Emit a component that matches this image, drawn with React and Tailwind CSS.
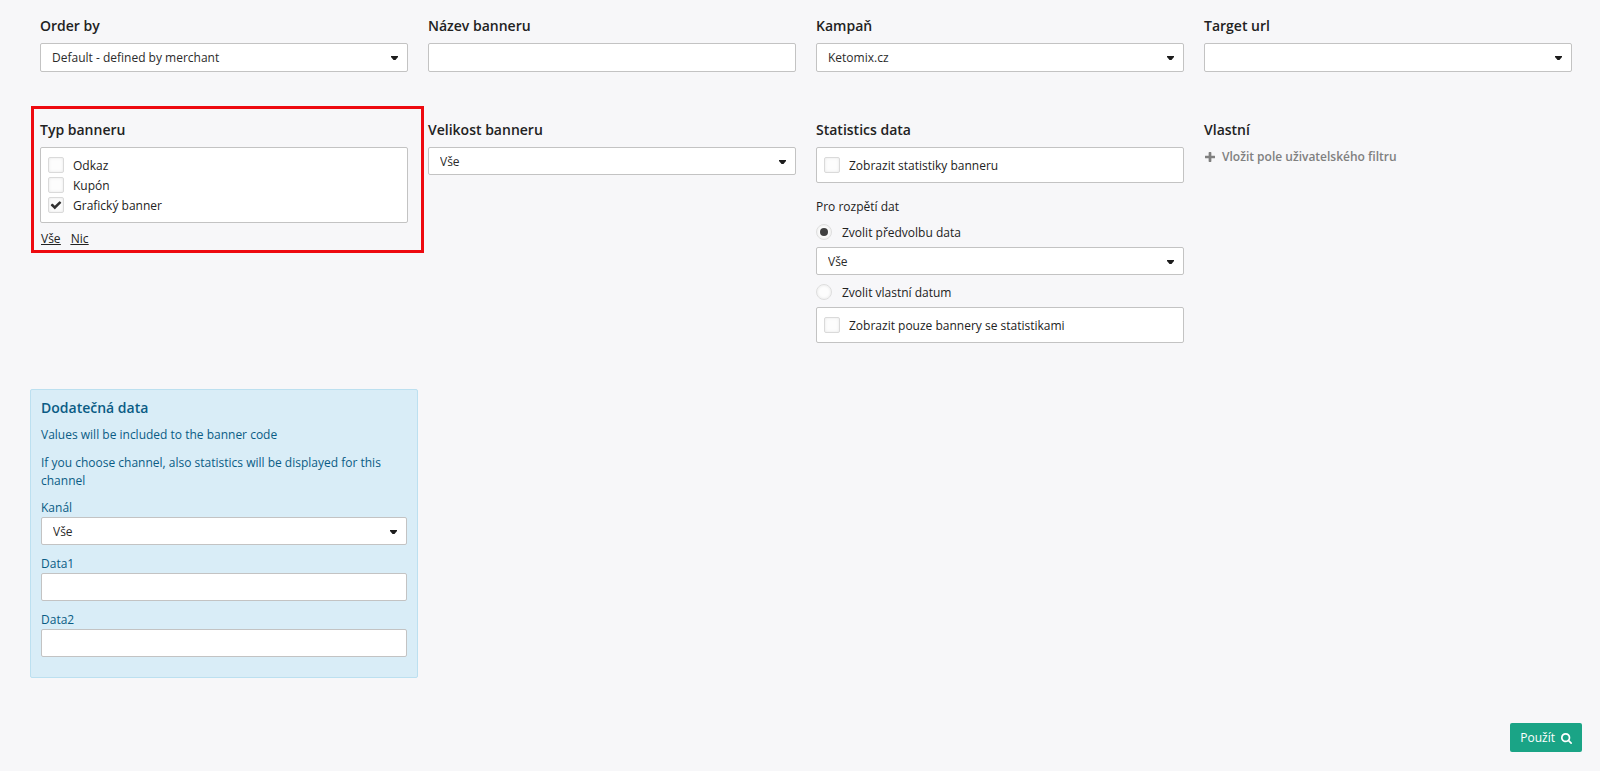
import { useState } from 'react';

const BANNER_TYPES = [
  { id: 'link', label: 'Odkaz' },
  { id: 'coupon', label: 'Kupón' },
  { id: 'image', label: 'Grafický banner' },
];

const CheckIcon = ({ className }) => (
  <svg className={className} viewBox="0 0 1792 1792" fill="currentColor">
    <path d="M1671 566q0 40-28 68l-724 724-136 136q-28 28-68 28t-68-28l-136-136-362-362q-28-28-28-68t28-68l136-136q28-28 68-28t68 28l294 295 656-657q28-28 68-28t68 28l136 136q28 28 28 68z" />
  </svg>
);

const PlusIcon = ({ className }) => (
  <svg className={className} viewBox="192 128 1408 1408" fill="currentColor">
    <path d="M1600 736v192q0 40-28 68t-68 28h-416v416q0 40-28 68t-68 28h-192q-40 0-68-28t-28-68v-416h-416q-40 0-68-28t-28-68v-192q0-40 28-68t68-28h416v-416q0-40 28-68t68-28h192q40 0 68 28t28 68v416h416q40 0 68 28t28 68z" />
  </svg>
);

const SearchIcon = ({ className }) => (
  <svg className={className} viewBox="64 128 1664 1664" fill="currentColor">
    <path d="M1216 832q0-185-131.5-316.5t-316.5-131.5-316.5 131.5-131.5 316.5 131.5 316.5 316.5 131.5 316.5-131.5 131.5-316.5zm512 832q0 52-38 90t-90 38q-54 0-90-38l-343-342q-179 124-399 124-143 0-273.5-55.5t-225-150-150-225-55.5-273.5 55.5-273.5 150-225 225-150 273.5-55.5 273.5 55.5 225 150 150 225 55.5 273.5q0 220-124 399l343 343q37 37 37 90z" />
  </svg>
);

const FieldTitle = ({ htmlFor, children }) => (
  <label htmlFor={htmlFor} className="mb-[7px] block text-sm font-semibold">
    {children}
  </label>
);

const Select = ({ id, label, options, tall }) => (
  <div className="relative">
    <select
      id={id}
      aria-label={label}
      className={`block w-full appearance-none rounded-xs border border-[#c3c3c3] bg-white pt-px pr-8 pl-[11px] text-xs text-[#2b2b2b] outline-none ${
        tall ? 'h-[29px]' : 'h-7'
      }`}
    >
      {options.map((option) => (
        <option key={option}>{option}</option>
      ))}
    </select>
    <svg className="pointer-events-none absolute top-[13px] right-[10px] h-1 w-[7px]" viewBox="0 0 7 4" fill="#1c1c1c">
      <path d="M0 0h7v1L4.5 4h-2L0 1z" />
    </svg>
  </div>
);

const TextInput = ({ id, tall }) => (
  <input
    id={id}
    type="text"
    className={`block w-full rounded-xs border border-[#c3c3c3] bg-white px-[11px] text-xs text-[#2b2b2b] outline-none ${
      tall ? 'h-[29px]' : 'h-7'
    }`}
  />
);

const Checkbox = ({ label, checked, onChange }) => (
  <label className="flex h-5 items-center gap-[9px] text-xs">
    <span className="relative h-4 w-4">
      <input
        type="checkbox"
        checked={checked}
        onChange={onChange}
        className="block h-4 w-4 appearance-none rounded-xs border border-[#dadada] bg-[#fdfdfd] shadow-[inset_0_0_3px_#e4e4e4]"
      />
      {checked && <CheckIcon className="pointer-events-none absolute top-[2px] left-[2px] h-3 w-3 text-[#333]" />}
    </span>
    <span className="pt-[2px]">{label}</span>
  </label>
);

const Radio = ({ label, checked, onChange }) => (
  <label className="flex h-4 items-center gap-[10px] text-xs">
    <span className="relative h-4 w-4">
      <input
        type="radio"
        name="dateRange"
        checked={checked}
        onChange={onChange}
        className="block h-4 w-4 appearance-none rounded-full border border-[#dedede] bg-[#fdfdfd] shadow-[inset_0_0_3px_#e4e4e4]"
      />
      {checked && <span className="pointer-events-none absolute top-1 left-1 h-2 w-2 rounded-full bg-[#404040]" />}
    </span>
    <span className="pt-px">{label}</span>
  </label>
);

const Box = ({ children }) => (
  <div className="rounded-xs border border-[#c3c3c3] bg-white px-[7px] py-[7px]">{children}</div>
);

const App = () => {
  const [types, setTypes] = useState(['image']);
  const [showStats, setShowStats] = useState(false);
  const [onlyWithStats, setOnlyWithStats] = useState(false);
  const [range, setRange] = useState('preset');

  const toggleType = (id) => {
    setTypes(types.includes(id) ? types.filter((type) => type !== id) : [...types, id]);
  };

  const selectTypes = (e, next) => {
    e.preventDefault();
    setTypes(next);
  };

  return (
    <form
      className="min-h-screen bg-[#f7f7f9] pt-4 pr-7 pb-[19px] pl-10 font-['Open_Sans',sans-serif] text-[#222]"
      onSubmit={(e) => e.preventDefault()}
    >
      <div className="grid grid-cols-4 items-start gap-x-5">
        <div>
          <FieldTitle htmlFor="orderBy">Order by</FieldTitle>
          <Select id="orderBy" options={['Default - defined by merchant']} tall />
        </div>
        <div>
          <FieldTitle htmlFor="bannerName">Název banneru</FieldTitle>
          <TextInput id="bannerName" tall />
        </div>
        <div>
          <FieldTitle htmlFor="campaign">Kampaň</FieldTitle>
          <Select id="campaign" options={['Ketomix.cz']} tall />
        </div>
        <div>
          <FieldTitle htmlFor="targetUrl">Target url</FieldTitle>
          <Select id="targetUrl" options={['']} tall />
        </div>
      </div>

      <div className="mt-12 grid grid-cols-4 items-start gap-x-5">
        <div className="relative">
          <div className="pointer-events-none absolute -top-[14px] -right-4 -bottom-[6px] -left-[9px] border-3 border-[#ee0a10]" />
          <h3 className="mb-[7px] text-sm font-semibold">Typ banneru</h3>
          <Box>
            {BANNER_TYPES.map((type) => (
              <Checkbox
                key={type.id}
                label={type.label}
                checked={types.includes(type.id)}
                onChange={() => toggleType(type.id)}
              />
            ))}
          </Box>
          <div className="mt-2 flex gap-[10px] pl-px text-xs underline">
            <a href="#all" onClick={(e) => selectTypes(e, BANNER_TYPES.map((type) => type.id))}>Vše</a>
            <a href="#none" onClick={(e) => selectTypes(e, [])}>Nic</a>
          </div>
        </div>

        <div>
          <FieldTitle htmlFor="bannerSize">Velikost banneru</FieldTitle>
          <Select id="bannerSize" options={['Vše']} />
        </div>

        <div>
          <h3 className="mb-[7px] text-sm font-semibold">Statistics data</h3>
          <Box>
            <Checkbox
              label="Zobrazit statistiky banneru"
              checked={showStats}
              onChange={() => setShowStats(!showStats)}
            />
          </Box>
          <p className="mt-4 mb-[9px] text-xs">Pro rozpětí dat</p>
          <Radio label="Zvolit předvolbu data" checked={range === 'preset'} onChange={() => setRange('preset')} />
          <div className="mt-[7px] mb-[9px]">
            <Select id="datePreset" label="Předvolba data" options={['Vše']} />
          </div>
          <Radio label="Zvolit vlastní datum" checked={range === 'custom'} onChange={() => setRange('custom')} />
          <div className="mt-[7px]">
            <Box>
              <Checkbox
                label="Zobrazit pouze bannery se statistikami"
                checked={onlyWithStats}
                onChange={() => setOnlyWithStats(!onlyWithStats)}
              />
            </Box>
          </div>
        </div>

        <div>
          <h3 className="mb-[9px] text-sm font-semibold">Vlastní</h3>
          <button type="button" className="flex items-center gap-[7px] pl-px text-xs font-semibold text-[#808080]">
            <PlusIcon className="h-[10px] w-[10px]" />
            Vložit pole uživatelského filtru
          </button>
        </div>
      </div>

      {/* Additional data */}
      <div className="mt-[46px] grid grid-cols-4 gap-x-5">
        <section className="-mx-[10px] rounded-xs border border-[#bce0f0] bg-[#d9edf7] px-[10px] pt-2 pb-5 text-xs/[18px] text-[#0a5c85]">
          <h3 className="mb-2 text-sm font-semibold">Dodatečná data</h3>
          <p className="mb-[10px]">Values will be included to the banner code</p>
          <p className="mb-[9px]">If you choose channel, also statistics will be displayed for this channel</p>
          <label htmlFor="channel" className="block">Kanál</label>
          <Select id="channel" options={['Vše']} />
          <label htmlFor="data1" className="mt-[10px] block">Data1</label>
          <TextInput id="data1" />
          <label htmlFor="data2" className="mt-[10px] block">Data2</label>
          <TextInput id="data2" />
        </section>
      </div>

      <div className="-mr-[10px] mt-[45px] flex justify-end">
        <button type="submit" className="flex h-[29px] items-center gap-[6px] rounded-xs bg-[#1aa486] px-[10px] pt-px text-xs text-white">
          Použít
          <SearchIcon className="h-[11px] w-[11px]" />
        </button>
      </div>
    </form>
  );
};

export default App;
